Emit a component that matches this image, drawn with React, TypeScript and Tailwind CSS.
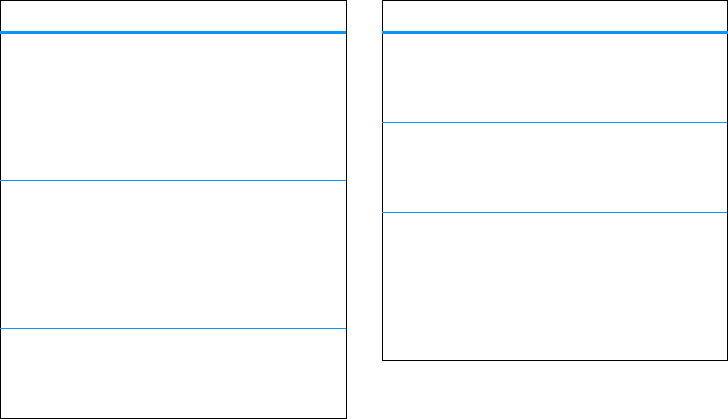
const leftRows = ['h-[147px]', 'h-[148px]', 'h-[89px]']
const rightRows = ['h-[89px]', 'h-[90px]', 'h-[147px]']

// header rule runs over the side borders; row rules only over the left one
function Table({ rows, width, headRight }: { rows: string[]; width: string; headRight?: boolean }) {
  return (
    <div className={`${width} shrink-0 border border-black bg-white flex flex-col`}>
      <div className={`h-[33px] -ml-px border-b-[3px] border-[#0c95f5] ${headRight ? '-mr-px' : ''}`} />
      {rows.map((h, i) => (
        <div
          key={i}
          className={`${h} ${i < rows.length - 1 ? '-ml-px border-b border-[#0c95f5]' : ''}`}
        />
      ))}
    </div>
  )
}

export default function App() {
  return (
    <div className="w-[728px] h-[419px] bg-white flex items-start gap-[35px] font-['Liberation_Sans',sans-serif]">
      <Table rows={leftRows} width="w-[347px]" />
      <Table rows={rightRows} width="w-[346px]" headRight />
    </div>
  )
}
